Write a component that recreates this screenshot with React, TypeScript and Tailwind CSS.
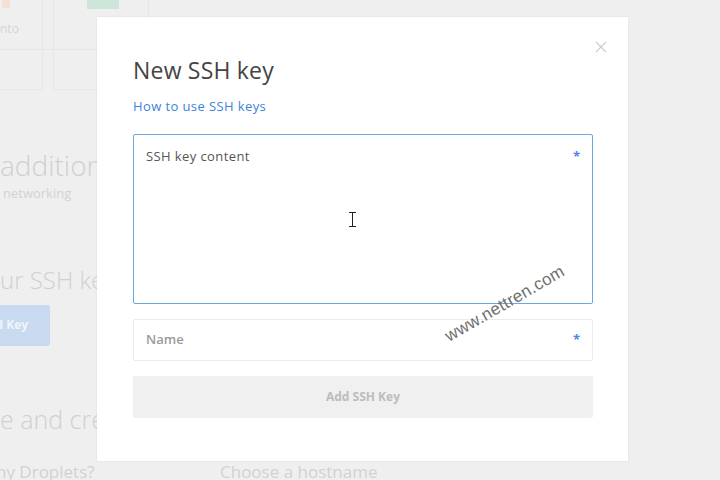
import React from "react";

export default function App() {
  const font = { fontFamily: '"Open Sans", "Liberation Sans", sans-serif' };
  return (
    <div className="relative w-[720px] h-[480px] overflow-hidden bg-[#efefef]" style={font}>
      {/* background page (dimmed) */}
      <div className="flex flex-col">
        <div className="flex h-[50px]">
          <div className="w-[43px] border-r border-b border-[#e6e6e6] flex flex-col pl-[2px]">
            <div className="w-[8px] h-[8px] bg-[#f6dfd4]"></div>
            <div className="mt-[12px] text-[12px] text-[#d4d4d4] -ml-[2px]">nto</div>
          </div>
          <div className="w-[10px] border-b border-[#e6e6e6]"></div>
          <div className="w-[96px] border-l border-r border-b border-[#e6e6e6] pl-[33px]">
            <div className="w-[32px] h-[9px] bg-[#cde6da]"></div>
          </div>
          <div className="w-[60px] border-b border-[#e6e6e6]"></div>
        </div>
        <div className="flex h-[40px]">
          <div className="w-[43px] border-r border-b border-[#e8e8e8]"></div>
          <div className="w-[10px]"></div>
          <div className="w-[96px] border-l border-r border-b border-[#e8e8e8]"></div>
        </div>
        <div className="mt-[59px] text-[28px] font-light leading-[32px] text-[#d0d0d0] whitespace-nowrap">additional options</div>
        <div className="mt-[3px] pl-[3px] text-[13px] text-[#d2d2d2]">networking</div>
        <div className="mt-[61px] text-[24px] font-light leading-[30px] text-[#d0d0d0] whitespace-nowrap">ur SSH keys</div>
        <div className="mt-[10px] w-[50px] h-[41px] bg-[#c8d9f0] rounded-r-[3px] flex items-center overflow-hidden">
          <span className="text-[12px] font-bold text-[#f1f5fb] -ml-[6px] whitespace-nowrap">H Key</span>
        </div>
        <div className="mt-[58px] text-[25px] font-light leading-[30px] text-[#d0d0d0] whitespace-nowrap">e and create</div>
        <div className="mt-[27px] flex text-[17px] leading-[22px] text-[#d2d2d2] whitespace-nowrap">
          <span className="w-[224px] -ml-[4px]">ny Droplets?</span>
          <span>Choose a hostname</span>
        </div>
      </div>

      {/* modal */}
      <div className="absolute left-[97px] top-[17px] w-[531px] h-[444px] bg-white shadow-[0_0_2px_rgba(0,0,0,0.08)] pl-[36px] pr-[35px] pt-[38px]">
        <button className="absolute left-[498px] top-[24px] w-[12px] h-[12px]">
          <svg width="12" height="12" viewBox="0 0 12 12">
            <path d="M1 1 L11 11 M11 1 L1 11" stroke="#cfcfcf" strokeWidth="1.3" />
          </svg>
        </button>
        <div className="text-[23px] leading-[30px] text-[#444] tracking-[0.2px]">New SSH key</div>
        <div className="mt-[12px] text-[13px] leading-[18px] text-[#3b82e0] tracking-[0.4px]">How to use SSH keys</div>
        <div className="mt-[19px] h-[170px] border border-[#6ea6e0] rounded-[2px] flex justify-between px-[12px] pt-[12px]">
          <span className="text-[13px] leading-[18px] text-[#555] tracking-[0.4px]">SSH key content</span>
          <span className="text-[13px] leading-[18px] text-[#4a86e8] font-bold">*</span>
        </div>
        <div className="mt-[15px] h-[42px] border border-[#ebebeb] rounded-[2px] flex items-center justify-between px-[12px]">
          <span className="text-[13px] font-semibold text-[#9a9a9a]">Name</span>
          <span className="text-[13px] text-[#4a86e8] font-bold">*</span>
        </div>
        <div className="mt-[15px] h-[42px] bg-[#f0f0f0] rounded-[2px] flex items-center justify-center">
          <span className="text-[12px] font-bold text-[#bcbcbc]">Add SSH Key</span>
        </div>
      </div>

      {/* I-beam cursor */}
      <div className="absolute left-[349px] top-[212px]">
        <svg width="7" height="15" viewBox="0 0 7 15">
          <path d="M0 0.5 H7 M3.5 0.5 V14.5 M0 14.5 H7" stroke="#222" strokeWidth="1" fill="none" />
        </svg>
      </div>

      {/* watermark */}
      <div className="absolute left-[429px] top-[294px] w-[152px] text-center text-[17px] leading-[20px] text-[#707070] -rotate-[30deg] tracking-[0.3px]" style={{ fontFamily: '"Liberation Sans", Arial, sans-serif' }}>
        www.nettren.com
      </div>
    </div>
  );
}
